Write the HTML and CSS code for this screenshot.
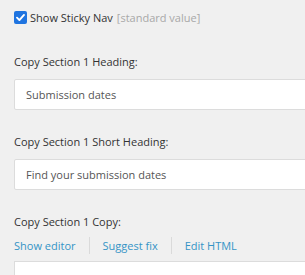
FILE: index.html
```html
<!DOCTYPE html>
<html>
<head>
<meta charset="utf-8">
<link rel="stylesheet" href="styles.css">
</head>
<body>
<div class="form">
  <label class="check-row">
    <span class="checkbox">
      <svg width="13" height="13" viewBox="0 0 13 13"><rect x="0" y="0" width="13" height="13" rx="2" fill="#1f74e0"/><path d="M3 6.7 L5.4 9.1 L10 3.9" fill="none" stroke="#fff" stroke-width="1.9" stroke-linecap="round" stroke-linejoin="round"/></svg>
    </span>
    <span class="check-label">Show Sticky Nav</span>
    <span class="std">[standard value]</span>
  </label>

  <div class="field">
    <div class="field-label">Copy Section 1 Heading:</div>
    <div class="input">Submission dates</div>
  </div>

  <div class="field">
    <div class="field-label">Copy Section 1 Short Heading:</div>
    <div class="input">Find your submission dates</div>
  </div>

  <div class="field">
    <div class="field-label">Copy Section 1 Copy:</div>
    <div class="links">
      <a class="link">Show editor</a>
      <span class="sep"></span>
      <a class="link">Suggest fix</a>
      <span class="sep"></span>
      <a class="link">Edit HTML</a>
    </div>
    <div class="editor"></div>
  </div>
</div>
</body>
</html>
```
FILE: styles.css
```css
html, body {
  margin: 0;
  padding: 0;
  background: #f0f0f0;
  overflow: hidden;
  height: 275px;
}
body {
  font-family: "Open Sans", sans-serif;
  font-size: 11px;
  color: #333;
}
.form {
  padding: 9px 0 0 14px;
}
.check-row {
  display: flex;
  align-items: center;
  height: 16px;
  margin-bottom: 29px;
}
.checkbox {
  display: flex;
  width: 13px;
  height: 13px;
  margin-right: 3px;
}
.check-label {
  color: #333;
}
.std {
  color: #a8a8a8;
  margin-left: 4px;
}
.field {
  margin-bottom: 24px;
}
.field-label {
  height: 16px;
  line-height: 16px;
  margin-bottom: 9px;
}
.input {
  box-sizing: border-box;
  width: 320px;
  height: 31px;
  background: #fff;
  border: 1px solid #dcdcdc;
  border-radius: 2px;
  padding: 0 11px;
  line-height: 29px;
  color: #555;
}
.field-label + .links {
  margin-top: -2px;
}
.links {
  display: flex;
  align-items: center;
  height: 16px;
  margin-bottom: 8px;
}
.link {
  color: #3594c6;
}
.sep {
  width: 1px;
  height: 17px;
  background: #dadada;
  margin: 0 13px;
}
.editor {
  box-sizing: border-box;
  width: 320px;
  height: 40px;
  background: #fff;
  border: 1px solid #dcdcdc;
}
```
